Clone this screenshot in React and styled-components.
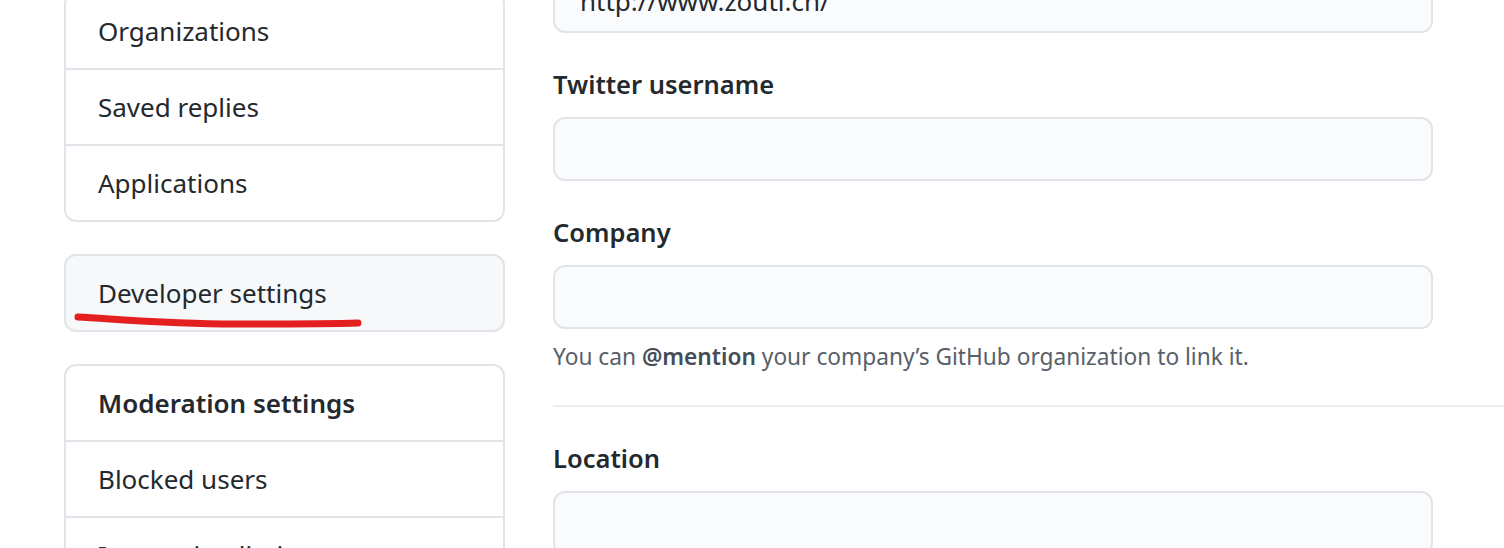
import React from 'react'
import styled, { createGlobalStyle } from 'styled-components'

const GlobalStyle = createGlobalStyle`
  html, body {
    margin: 0;
    padding: 0;
    background: #ffffff;
    overflow: hidden;
  }
  body {
    font-family: "Noto Sans", "Liberation Sans", Arial, sans-serif;
    color: #24292e;
  }
`

const Page = styled.div`
  display: flex;
  align-items: flex-start;
  gap: 48px;
  padding-left: 64px;
  width: 1504px;
  box-sizing: border-box;
`

const Sidebar = styled.nav`
  width: 441px;
  flex-shrink: 0;
  margin-top: -8px;
  display: flex;
  flex-direction: column;
  gap: 32px;
`

const Menu = styled.div`
  position: relative;
  border: 2px solid #e1e4e8;
  border-radius: 12px;
  background: ${props => (props.muted ? '#f6f8fa' : '#ffffff')};
  overflow: hidden;
`

const MenuItem = styled.div`
  height: 74px;
  display: flex;
  align-items: center;
  padding: 0 32px;
  font-size: 26px;
  font-weight: ${props => (props.heading ? 600 : 400)};
  color: #24292e;
  & + & {
    border-top: 2px solid #e1e4e8;
  }
`

const Scribble = styled.svg`
  position: absolute;
  left: 0;
  top: 0;
  pointer-events: none;
`

const Main = styled.main`
  flex: 1;
  margin-top: -31px;
  display: flex;
  flex-direction: column;
`

const FormGroup = styled.div`
  width: 880px;
  display: flex;
  flex-direction: column;
  margin-bottom: ${props => (props.last ? '0' : '30px')};
`

const Label = styled.label`
  font-size: 25.5px;
  font-weight: 600;
  line-height: 42px;
  margin-bottom: 12px;
  color: #24292e;
`

const Input = styled.div`
  height: 60px;
  border: 2px solid #e1e4e8;
  border-radius: 12px;
  background: #fafbfc;
  padding: 0 25px;
  display: flex;
  align-items: center;
  font-size: 26px;
  color: #24292e;
`

const Note = styled.p`
  margin: 10px 0 0;
  font-size: 22.7px;
  line-height: 36px;
  color: #586069;
  strong {
    color: #444d56;
    font-weight: 600;
  }
`

const Divider = styled.hr`
  border: 0;
  height: 2px;
  background: #eaecef;
  margin: 0 0 30px;
`

export default function App() {
  return (
    <>
      <GlobalStyle />
      <Page>
        <Sidebar>
          <Menu>
            <MenuItem>Organizations</MenuItem>
            <MenuItem>Saved replies</MenuItem>
            <MenuItem>Applications</MenuItem>
          </Menu>
          <Menu muted>
            <MenuItem>Developer settings</MenuItem>
            <Scribble width="441" height="80" viewBox="0 0 441 80">
              <path
                d="M12 61 C 50 63, 100 68, 170 68 S 260 68, 292 67"
                fill="none"
                stroke="#e41f1f"
                strokeWidth="7"
                strokeLinecap="round"
              />
            </Scribble>
          </Menu>
          <Menu>
            <MenuItem heading>Moderation settings</MenuItem>
            <MenuItem>Blocked users</MenuItem>
            <MenuItem>Interaction limits</MenuItem>
          </Menu>
        </Sidebar>
        <Main>
          <FormGroup>
            <Input>http://www.zouti.cn/</Input>
          </FormGroup>
          <FormGroup>
            <Label>Twitter username</Label>
            <Input />
          </FormGroup>
          <FormGroup>
            <Label>Company</Label>
            <Input />
            <Note>
              You can <strong>@mention</strong> your company’s GitHub organization to link it.
            </Note>
          </FormGroup>
          <Divider />
          <FormGroup last>
            <Label>Location</Label>
            <Input />
          </FormGroup>
        </Main>
      </Page>
    </>
  )
}
